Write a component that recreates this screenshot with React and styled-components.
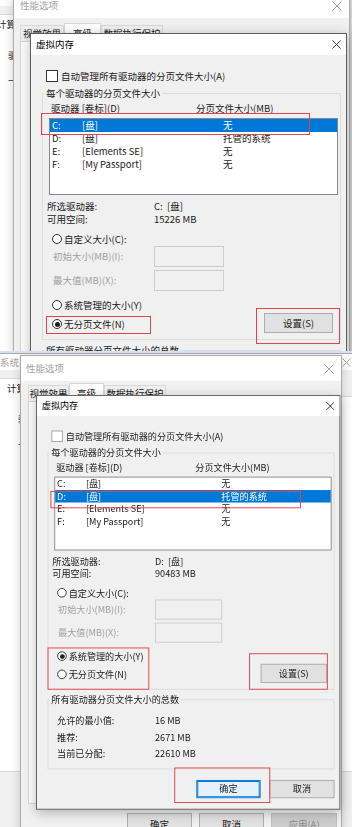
import React from "react"
import styled, { createGlobalStyle } from "styled-components"

const GlobalStyle = createGlobalStyle`
    * { box-sizing: border-box; }
    html, body { margin: 0; padding: 0; background: #f0f0f0; }
    body {
        width: 352px;
        height: 827px;
        overflow: hidden;
        font-family: "Noto Sans CJK SC", "Noto Sans", sans-serif;
        font-size: 9.5px;
        line-height: 13px;
        color: #1a1a1a;
    }
`

const Page = styled.div`
    display: flex;
    flex-direction: column;
    width: 352px;
`

const Shot = styled.div`
    position: relative;
    flex: none;
    height: ${(p) => p.$h}px;
    overflow: hidden;
    background: #f0f0f0;
`

const Divider = styled.div`
    flex: none;
    height: 2px;
    background: #d3e2f2;
`

/* ---------- background windows ---------- */

const Window = styled.div`
    position: absolute;
    left: ${(p) => p.$x}px;
    top: ${(p) => p.$y}px;
    width: ${(p) => p.$w}px;
    height: ${(p) => p.$h}px;
    z-index: ${(p) => p.$z};
    display: flex;
    flex-direction: column;
    background: #f0f0f0;
    border: 1px solid #ababab;
    box-shadow: 0 2px 10px rgba(0, 0, 0, 0.18);
`

const WinTitle = styled.div`
    flex: none;
    height: ${(p) => p.$h}px;
    display: flex;
    align-items: center;
    justify-content: space-between;
    padding: 0 ${(p) => p.$pr}px 0 ${(p) => p.$pl}px;
    background: #fff;
    color: #a3a3a3;
`

const WinBody = styled.div`
    flex: 1;
    display: flex;
    flex-direction: column;
    padding: ${(p) => p.$pt}px ${(p) => p.$pr}px 0 ${(p) => p.$pl}px;
`

const Tabs = styled.div`
    flex: none;
    display: flex;
    align-items: flex-end;
    height: 17px;
`

const Tab = styled.div`
    width: ${(p) => p.$w}px;
    height: ${(p) => (p.$sel ? 19 : 16)}px;
    display: flex;
    align-items: center;
    justify-content: center;
    white-space: nowrap;
    background: ${(p) => (p.$sel ? "#fff" : "#f0f0f0")};
    border: 1px solid #d9d9d9;
    border-bottom: none;
    margin-bottom: ${(p) => (p.$sel ? -1 : 0)}px;
    position: relative;
    z-index: ${(p) => (p.$sel ? 1 : 0)};
    color: #1a1a1a;
`

const TabPage = styled.div`
    flex: none;
    height: ${(p) => p.$h}px;
    background: #fff;
    border: 1px solid #d9d9d9;
    display: flex;
    flex-direction: column;
    padding-left: 26px;
`

const Fragment = styled.div`
    margin-top: ${(p) => p.$mt}px;
    white-space: nowrap;
    color: #333;
`

const WinButtons = styled.div`
    display: flex;
    justify-content: flex-end;
    gap: 7px;
    margin-top: 9px;
`

/* ---------- virtual memory dialog ---------- */

const Dialog = styled.div`
    position: absolute;
    left: ${(p) => p.$x}px;
    top: ${(p) => p.$y}px;
    z-index: 3;
    width: 317px;
    height: 432px;
    transform: scale(${(p) => p.$scale});
    transform-origin: 0 0;
    display: flex;
    flex-direction: column;
    background: #f0f0f0;
    border: 1px solid #5d5d5d;
    box-shadow: 0 3px 12px rgba(0, 0, 0, 0.28);
`

const DialogTitle = styled.div`
    flex: none;
    height: 21px;
    display: flex;
    align-items: center;
    justify-content: space-between;
    padding: 0 5px 0 5px;
    background: #fff;
    color: #000;
`

const DialogBody = styled.div`
    display: flex;
    flex-direction: column;
`

const CheckRow = styled.div`
    display: flex;
    align-items: center;
    gap: 3px;
    height: 14px;
    margin: 14px 0 0 15px;
`

const CheckBox = styled.span`
    flex: none;
    width: 12px;
    height: 12px;
    background: #fff;
    border: 1px solid ${(p) => (p.$light ? "#a2a2a2" : "#333")};
`

const Group = styled.fieldset`
    margin: ${(p) => p.$mt}px 5px 0 11px;
    padding: 0 0 ${(p) => p.$pb}px 0;
    min-width: 0;
    border: 1px solid #dcdcdc;
    display: flex;
    flex-direction: column;
`

const Legend = styled.legend`
    margin-left: 1px;
    padding: 0 2px;
    line-height: 13px;
`

const HeaderRow = styled.div`
    display: grid;
    grid-template-columns: 145px 1fr;
    align-items: center;
    height: 14px;
    margin-top: 1.5px;
    padding-left: 8px;
`

const DriveList = styled.div`
    margin: 3px 0 0 6px;
    width: 289px;
    height: 77px;
    background: #fff;
    border: 1px solid #828790;
`

const DriveRow = styled.div`
    display: grid;
    grid-template-columns: 30px 141px 1fr;
    height: 13px;
    line-height: 13px;
    padding-left: 2px;
    white-space: nowrap;
    background: ${(p) => (p.$sel ? "#0078d7" : "transparent")};
    color: ${(p) => (p.$sel ? "#fff" : "#1a1a1a")};
`

const InfoRow = styled.div`
    display: grid;
    grid-template-columns: ${(p) => p.$col}px 1fr;
    align-items: center;
    height: ${(p) => p.$h}px;
    padding-left: ${(p) => p.$pl}px;
    margin-top: ${(p) => p.$mt || 0}px;
    white-space: nowrap;
`

const RadioRow = styled.div`
    display: flex;
    align-items: center;
    gap: 2px;
    height: 14px;
    padding-left: 9px;
    margin-top: ${(p) => p.$mt || 0}px;
    white-space: nowrap;
`

const Radio = styled.span`
    flex: none;
    width: 10px;
    height: 10px;
    border-radius: 50%;
    border: 1px solid #333;
    background: #fff;
    display: flex;
    align-items: center;
    justify-content: center;

    &::after {
        content: "";
        width: 5px;
        height: 5px;
        border-radius: 50%;
        background: ${(p) => (p.$on ? "#222" : "transparent")};
    }
`

const SizeRow = styled.div`
    display: grid;
    grid-template-columns: 101px 70px;
    align-items: center;
    height: 21px;
    padding-left: 10px;
    margin-top: ${(p) => p.$mt}px;
    color: #a0a0a0;
    white-space: nowrap;
`

const SizeInput = styled.div`
    height: 21px;
    border: 1px solid #cccccc;
    background: #f0f0f0;
`

const ModeArea = styled.div`
    display: flex;
    justify-content: space-between;
    align-items: flex-start;
    margin-top: 7px;
`

const ModeList = styled.div`
    display: flex;
    flex-direction: column;
    gap: 5px;
`

const Button = styled.div`
    flex: none;
    width: ${(p) => p.$w}px;
    height: ${(p) => p.$h}px;
    display: flex;
    align-items: center;
    justify-content: center;
    white-space: nowrap;
    background: ${(p) => (p.$focus ? "#e5f1fb" : p.$disabled ? "#cccccc" : "#e1e1e1")};
    border: 1px solid ${(p) => (p.$focus ? "#0078d7" : p.$disabled ? "#bfbfbf" : "#adadad")};
    box-shadow: ${(p) => (p.$focus ? "inset 0 0 0 1px #0078d7" : "none")};
    color: ${(p) => (p.$disabled ? "#8a8a8a" : "#1a1a1a")};
`

const SetButton = styled(Button)`
    margin: 15px 7px 0 0;
`

const DialogButtons = styled.div`
    display: flex;
    justify-content: flex-end;
    gap: 9px;
    margin-top: 11px;
    padding-right: 5px;
`

const Mark = styled.div`
    position: absolute;
    left: ${(p) => p.$x}px;
    top: ${(p) => p.$y}px;
    width: ${(p) => p.$w}px;
    height: ${(p) => p.$h}px;
    border: 1px solid #e0454b;
    pointer-events: none;
`

const CloseIcon = ({ color = "#222", size = 9 }) => (
    <svg width={size} height={size} viewBox="0 0 10 10">
        <path d="M0.5 0.5 L9.5 9.5 M9.5 0.5 L0.5 9.5" stroke={color} strokeWidth="1" fill="none" />
    </svg>
)

const drives = [
    { d: "C:", label: "[盘]", size: "无" },
    { d: "D:", label: "[盘]", size: "托管的系统" },
    { d: "E:", label: "[Elements SE]", size: "无" },
    { d: "F:", label: "[My Passport]", size: "无" },
]

function SystemWindow({ x, y, title }) {
    return (
        <Window $x={x} $y={y} $w={370} $h={520} $z={1}>
            <WinTitle $h={16} $pl={9} $pr={8}>
                <span>{title}</span>
                <CloseIcon color="#9a9a9a" />
            </WinTitle>
            <WinBody $pt={9} $pl={0} $pr={0}>
                <Tabs>
                    <Tab $w={70} $sel>
                        计算机名
                    </Tab>
                </Tabs>
                <TabPage $h={376}>
                    <Fragment $mt={16}>驱动器</Fragment>
                    <Fragment $mt={12}>一</Fragment>
                </TabPage>
            </WinBody>
        </Window>
    )
}

function PerformanceWindow({ x, y, w, pl, pt, tabPl, tabWidths, pageH, withButtons }) {
    const names = ["视觉效果", "高级", "数据执行保护"]
    return (
        <Window $x={x} $y={y} $w={w} $h={540} $z={2}>
            <WinTitle $h={25} $pl={pl} $pr={7}>
                <span>性能选项</span>
                <CloseIcon color="#a3a3a3" size={10} />
            </WinTitle>
            <WinBody $pt={pt} $pl={tabPl} $pr={4}>
                <Tabs>
                    {names.map((n, i) => (
                        <Tab key={n} $w={tabWidths[i]} $sel={i === 1}>
                            {n}
                        </Tab>
                    ))}
                </Tabs>
                <TabPage $h={pageH} />
                {withButtons && (
                    <WinButtons>
                        <Button $w={65} $h={22}>确定</Button>
                        <Button $w={65} $h={22}>取消</Button>
                        <Button $w={66} $h={22} $disabled>应用(A)</Button>
                    </WinButtons>
                )}
            </WinBody>
        </Window>
    )
}

function VirtualMemory({ x, y, scale, selected, drive, free, mode, lightCheck, marks }) {
    return (
        <Dialog $x={x} $y={y} $scale={scale}>
            <DialogTitle>
                <span>虚拟内存</span>
                <CloseIcon />
            </DialogTitle>
            <DialogBody>
                <CheckRow>
                    <CheckBox $light={lightCheck} />
                    <span>自动管理所有驱动器的分页文件大小(A)</span>
                </CheckRow>

                <Group $mt={3.5} $pb={6}>
                    <Legend>每个驱动器的分页文件大小</Legend>
                    <HeaderRow>
                        <span>驱动器 [卷标](D)</span>
                        <span>分页文件大小(MB)</span>
                    </HeaderRow>
                    <DriveList>
                        {drives.map((r, i) => (
                            <DriveRow key={r.d} $sel={i === selected}>
                                <span>{r.d}</span>
                                <span>{r.label}</span>
                                <span>{r.size}</span>
                            </DriveRow>
                        ))}
                    </DriveList>
                    <InfoRow $col={107} $h={13} $pl={4} $mt={5}>
                        <span>所选驱动器:</span>
                        <span>{drive}</span>
                    </InfoRow>
                    <InfoRow $col={107} $h={13} $pl={4}>
                        <span>可用空间:</span>
                        <span>{free}</span>
                    </InfoRow>
                    <RadioRow $mt={6}>
                        <Radio />
                        <span>自定义大小(C):</span>
                    </RadioRow>
                    <SizeRow $mt={0}>
                        <span>初始大小(MB)(I):</span>
                        <SizeInput />
                    </SizeRow>
                    <SizeRow $mt={3}>
                        <span>最大值(MB)(X):</span>
                        <SizeInput />
                    </SizeRow>
                    <ModeArea>
                        <ModeList>
                            <RadioRow>
                                <Radio $on={mode === "system"} />
                                <span>系统管理的大小(Y)</span>
                            </RadioRow>
                            <RadioRow>
                                <Radio $on={mode === "none"} />
                                <span>无分页文件(N)</span>
                            </RadioRow>
                        </ModeList>
                        <SetButton $w={69} $h={20}>设置(S)</SetButton>
                    </ModeArea>
                </Group>

                <Group $mt={4} $pb={6.5}>
                    <Legend>所有驱动器分页文件大小的总数</Legend>
                    <InfoRow $col={102} $h={17} $pl={9} $mt={7}>
                        <span>允许的最小值:</span>
                        <span>16 MB</span>
                    </InfoRow>
                    <InfoRow $col={102} $h={17} $pl={9}>
                        <span>推荐:</span>
                        <span>2671 MB</span>
                    </InfoRow>
                    <InfoRow $col={102} $h={17} $pl={9}>
                        <span>当前已分配:</span>
                        <span>22610 MB</span>
                    </InfoRow>
                </Group>

                <DialogButtons>
                    <Button $w={67} $h={19} $focus>确定</Button>
                    <Button $w={68} $h={19}>取消</Button>
                </DialogButtons>
            </DialogBody>

            {marks.map((m, i) => (
                <Mark key={i} $x={m[0]} $y={m[1]} $w={m[2]} $h={m[3]} />
            ))}
        </Dialog>
    )
}

export default function App() {
    return (
        <Page>
            <GlobalStyle />
            <Shot $h={351}>
                <SystemWindow x={-20} y={-11} title="" />
                <PerformanceWindow
                    x={13}
                    y={-8}
                    w={337}
                    pl={6}
                    pt={6}
                    tabPl={6}
                    tabWidths={[44, 37, 62]}
                    pageH={420}
                />
                <VirtualMemory
                    x={30}
                    y={33}
                    scale={1}
                    selected={0}
                    drive={"C:\u00a0\u00a0[盘]"}
                    free="15226 MB"
                    mode="none"
                    marks={[
                        [10, 79, 269, 22],
                        [15, 282, 105, 18],
                        [225, 274, 84, 36],
                    ]}
                />
            </Shot>
            <Divider />
            <Shot $h={474}>
                <SystemWindow x={-10} y={0} title="系统" />
                <PerformanceWindow
                    x={20}
                    y={2}
                    w={322}
                    pl={5}
                    pt={3}
                    tabPl={7}
                    tabWidths={[41, 35, 62]}
                    pageH={403}
                    withButtons
                />
                <VirtualMemory
                    x={36}
                    y={42}
                    scale={0.96}
                    selected={1}
                    drive={"D:\u00a0\u00a0[盘]"}
                    free="90483 MB"
                    mode="system"
                    lightCheck
                    marks={[
                        [14, 99, 261, 18],
                        [11, 262, 106, 44],
                        [221, 268, 82, 38],
                        [143, 387, 100, 37],
                    ]}
                />
            </Shot>
        </Page>
    )
}
